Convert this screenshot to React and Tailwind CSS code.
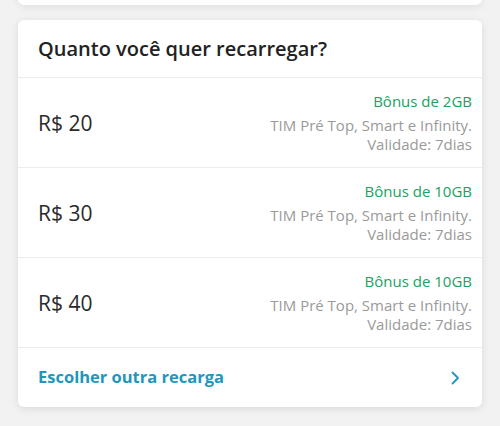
import React from 'react';

const recargas = [
  { valor: 'R$ 20', bonus: 'Bônus de 2GB' },
  { valor: 'R$ 30', bonus: 'Bônus de 10GB' },
  { valor: 'R$ 40', bonus: 'Bônus de 10GB' },
];

const Chevron = () => (
  <svg width="10" height="16" viewBox="0 0 10 16" fill="none">
    <path d="M2.5 2.5l5.5 5.5-5.5 5.5" stroke="#1d97bd" strokeWidth="1.8" strokeLinecap="round" strokeLinejoin="round" />
  </svg>
);

const App = () => {
  return (
    <div className="w-[500px] h-[426px] bg-[#f2f2f2] overflow-hidden relative" style={{ fontFamily: '"Open Sans", sans-serif' }}>
      {/* card above, cut off */}
      <div className="absolute left-[18px] right-[18px] -top-[40px] h-[45px] bg-white rounded-md shadow-[0_2px_8px_rgba(0,0,0,0.08)]" />

      <div className="mx-[18px] mt-[20px] bg-white rounded-md shadow-[0_2px_8px_rgba(0,0,0,0.1)]">
        <div className="h-[58px] px-5 flex items-center border-b border-[#ececec]">
          <h2 className="text-[20px] font-semibold text-[#222]">Quanto você quer recarregar?</h2>
        </div>

        <ul>
          {recargas.map((r) => (
            <li key={r.valor} className="h-[90px] pl-5 pr-[10px] flex items-center justify-between border-b border-[#ececec]">
              <span className="text-[21px] text-[#2a2a2a] pt-[2px]">{r.valor}</span>
              <div className="text-right leading-[19px]">
                <p className="text-[15px] text-[#22a061] mb-[5px]">{r.bonus}</p>
                <p className="text-[15px] text-[#9a9a9a]">TIM Pré Top, Smart e Infinity.</p>
                <p className="text-[15px] text-[#9a9a9a]">Validade: 7dias</p>
              </div>
            </li>
          ))}
        </ul>

        <button className="w-full h-[59px] pl-5 pr-[22px] flex items-center justify-between">
          <span className="text-[16.5px] font-bold text-[#1d97bd]">Escolher outra recarga</span>
          <Chevron />
        </button>
      </div>
    </div>
  );
};

export default App;
